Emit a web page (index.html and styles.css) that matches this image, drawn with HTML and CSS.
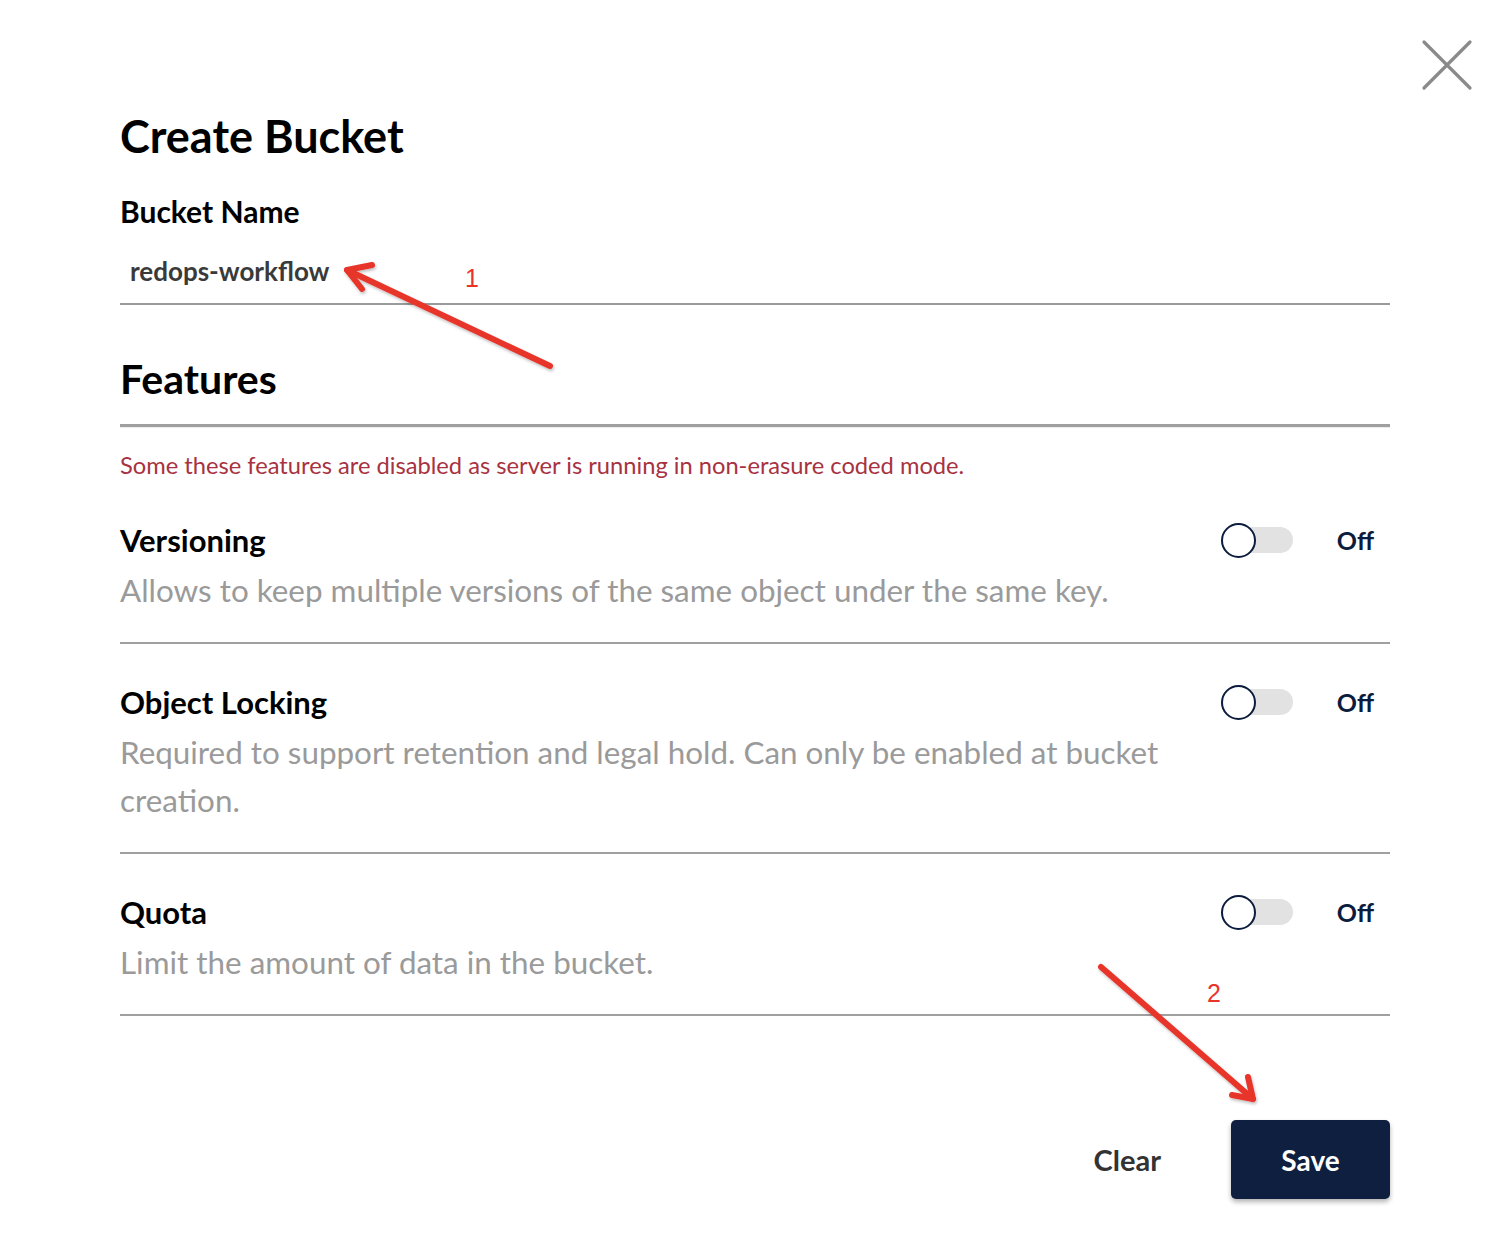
FILE: index.html
```html
<!DOCTYPE html>
<html>
<head>
<meta charset="utf-8">
<link rel="stylesheet" href="styles.css">
</head>
<body>
<div class="modal">
  <button class="close" aria-label="Close">
    <svg width="52" height="52" viewBox="0 0 52 52"><path d="M3 3 L49 49 M49 3 L3 49" stroke="#8a8a8a" stroke-width="3.2" stroke-linecap="round"/></svg>
  </button>
  <div class="content">
    <h1 class="title">Create Bucket</h1>
    <label class="field-label">Bucket Name</label>
    <div class="input">redops-workflow</div>
    <h2 class="section">Features</h2>
    <div class="section-rule"></div>
    <p class="notice">Some these features are disabled as server is running in non-erasure coded mode.</p>

    <div class="feature feature-first">
      <div class="feature-text">
        <div class="feature-title">Versioning</div>
        <div class="feature-desc">Allows to keep multiple versions of the same object under the same key.</div>
      </div>
      <div class="switch"><span class="track"><span class="knob"></span></span><span class="state">Off</span></div>
    </div>

    <div class="feature">
      <div class="feature-text">
        <div class="feature-title">Object Locking</div>
        <div class="feature-desc">Required to support retention and legal hold. Can only be enabled at bucket creation.</div>
      </div>
      <div class="switch"><span class="track"><span class="knob"></span></span><span class="state">Off</span></div>
    </div>

    <div class="feature">
      <div class="feature-text">
        <div class="feature-title">Quota</div>
        <div class="feature-desc">Limit the amount of data in the bucket.</div>
      </div>
      <div class="switch"><span class="track"><span class="knob"></span></span><span class="state">Off</span></div>
    </div>

    <div class="actions">
      <button class="btn-clear">Clear</button>
      <button class="btn-save">Save</button>
    </div>
  </div>

  <svg class="annotations" width="1506" height="1242" viewBox="0 0 1506 1242">
    <defs>
      <filter id="sh" x="-10%" y="-10%" width="120%" height="120%">
        <feDropShadow dx="1" dy="2" stdDeviation="1.5" flood-color="#000" flood-opacity="0.25"/>
      </filter>
    </defs>
    <g filter="url(#sh)" stroke="#e8352b" stroke-width="6" stroke-linecap="round" stroke-linejoin="round" fill="none">
      <path d="M550 366 L347 270"/>
      <path d="M372 265 L347 270 L362 289"/>
      <path d="M1101 967 L1253 1099"/>
      <path d="M1232 1095 L1253 1099 L1248 1077"/>
    </g>
    <text x="465" y="287" class="anno-num">1</text>
    <text x="1207" y="1002" class="anno-num">2</text>
  </svg>
</div>
</body>
</html>
```

FILE: styles.css
```css
* { box-sizing: border-box; }
html, body {
  margin: 0;
  padding: 0;
  background: #ffffff;
}
body {
  font-family: Lato, "Open Sans", sans-serif;
  color: #000;
  width: 1506px;
  height: 1242px;
  overflow: hidden;
}
.modal {
  position: relative;
  width: 1506px;
  height: 1242px;
}
.close {
  position: absolute;
  left: 1421px;
  top: 39px;
  width: 52px;
  height: 52px;
  padding: 0;
  border: 0;
  background: transparent;
}
.close svg { display: block; }
.content {
  padding: 106px 116px 0 120px;
  display: flex;
  flex-direction: column;
}
.title {
  margin: 0;
  font-size: 45px;
  font-weight: 700;
  line-height: 60px;
}
.field-label {
  margin-top: 25px;
  font-size: 30px;
  font-weight: 700;
  line-height: 40px;
}
.input {
  margin-top: 24px;
  padding: 0 10px 16px;
  font-size: 26px;
  font-weight: 700;
  color: #3a3a3a;
  line-height: 32px;
  border-bottom: 2px solid #9a9a9a;
}
.section {
  margin: 46px 0 0;
  font-size: 41px;
  font-weight: 700;
  line-height: 56px;
}
.section-rule {
  margin-top: 17px;
  height: 3px;
  background: #a0a0a0;
  box-shadow: 0 1px 1px rgba(0,0,0,0.08);
}
.notice {
  margin: 23px 0 0;
  font-size: 23.7px;
  color: #a8323f;
  line-height: 30px;
}
.feature {
  display: flex;
  align-items: flex-start;
  border-bottom: 2px solid #a0a0a0;
  padding: 38px 0 28px;
}
.feature-first { padding-top: 40px; }
.feature-text {
  flex: 1;
  padding-right: 40px;
}
.feature-title {
  font-size: 31px;
  font-weight: 700;
  line-height: 40px;
  color: #000;
}
.feature-desc {
  margin-top: 6px;
  font-size: 31.4px;
  color: #9a9a9a;
  line-height: 48px;
}
.switch {
  display: flex;
  align-items: center;
  gap: 44px;
  margin-top: 5px;
  padding-right: 16px;
}
.track {
  position: relative;
  display: block;
  width: 72px;
  height: 26px;
  margin-left: 1px;
  border-radius: 13px;
  background: #e2e2e2;
}
.knob {
  position: absolute;
  left: 0;
  top: -4px;
  width: 35px;
  height: 35px;
  border-radius: 50%;
  background: #fff;
  border: 2.5px solid #0b1c3d;
}
.state {
  font-size: 25px;
  font-weight: 700;
  color: #0b1c3d;
}
.actions {
  display: flex;
  justify-content: flex-end;
  align-items: center;
  margin-top: 104px;
  gap: 70px;
}
.btn-clear {
  border: 0;
  background: transparent;
  font-family: Lato, sans-serif;
  font-size: 29px;
  font-weight: 700;
  color: #333;
  padding: 0;
}
.btn-save {
  width: 159px;
  height: 79px;
  border: 0;
  border-radius: 5px;
  background: #0f1f40;
  color: #fff;
  font-family: Lato, sans-serif;
  font-size: 28px;
  font-weight: 700;
  box-shadow: 0 3px 5px rgba(0,0,0,0.3);
  padding-top: 2px;
}
.annotations {
  position: absolute;
  left: 0;
  top: 0;
  pointer-events: none;
}
.anno-num {
  font-family: "Liberation Sans", Arial, sans-serif;
  font-size: 25px;
  fill: #e8352b;
}
```
